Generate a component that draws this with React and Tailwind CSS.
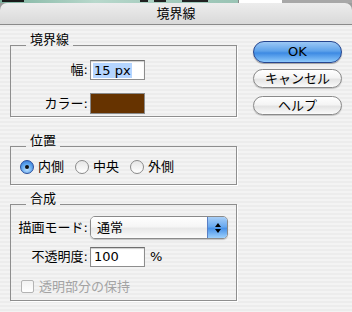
const font = { fontFamily: '"Lucida Grande","DejaVu Sans","Noto Sans CJK JP",sans-serif' }

function Group({ title, children, className = '' }) {
  return (
    <fieldset className={`border border-[#8e8e8e] shadow-[1px_1px_0_#ffffff] p-0 m-0 min-w-0 ${className}`}>
      <legend className="ml-[15px] px-[4px] text-[13px] leading-[14px] pb-[10px] text-black">{title}</legend>
      {children}
    </fieldset>
  )
}

function Radio({ checked, label }) {
  return (
    <div className="flex items-center">
      {checked ? (
        <span className="w-[14px] h-[14px] rounded-full border border-[#2a4f9c] bg-[radial-gradient(circle_at_50%_70%,#bfe1ff_0%,#5aa2ec_55%,#2c6bd1_100%)] flex items-center justify-center">
          <span className="w-[4px] h-[4px] rounded-full bg-[#111]" />
        </span>
      ) : (
        <span className="w-[14px] h-[14px] rounded-full border border-[#8a8a8a] bg-[linear-gradient(to_bottom,#e6e6e6,#ffffff)]" />
      )}
      <span className="ml-[4px] text-[13px] leading-[16px]">{label}</span>
    </div>
  )
}

function AquaButton({ children, primary, className = '' }) {
  return primary ? (
    <div className={`h-[22px] rounded-full border border-[#25458f] bg-[linear-gradient(to_bottom,#9cc8f5_0%,#5ea2ea_45%,#3d8ae3_55%,#8cc8fb_100%)] shadow-[0_1px_1px_rgba(0,0,0,0.35)] flex items-center justify-center text-[13px] ${className}`}>
      {children}
    </div>
  ) : (
    <div className={`h-[19px] rounded-full border border-[#8a8a8a] bg-[linear-gradient(to_bottom,#ffffff_0%,#f4f4f4_45%,#e4e4e4_55%,#fafafa_100%)] shadow-[0_1px_1px_rgba(0,0,0,0.2)] flex items-center justify-center text-[13px] ${className}`}>
      {children}
    </div>
  )
}

export default function App() {
  return (
    <div className="w-[352px] h-[312px] overflow-hidden bg-[#9c9c9c] flex flex-col text-black" style={font}>
      {/* background window strip */}
      <div className="h-[3px] flex shrink-0">
        <div className="w-[238px] bg-[linear-gradient(to_right,#7fb3a0,#b8d8cc_40%,#a4cbbd_70%,#9ac4b5)] flex items-start gap-[6px] pl-[2px]">
          <span className="w-[22px] h-[2px] bg-[#1a1a1a]" />
          <span className="ml-[110px] w-[8px] h-[2px] bg-[#222]" />
          <span className="w-[12px] h-[2px] bg-[#222]" />
          <span className="ml-[10px] w-[26px] h-[2px] bg-[#222]" />
        </div>
        <div className="w-[44px] bg-white border-l border-[#888]" />
        <div className="flex-1 bg-[#a8a8a8]" />
      </div>

      <div className="flex-1 flex flex-col rounded-t-[7px] overflow-hidden">
        {/* title bar */}
        <div className="h-[22px] shrink-0 border-b border-[#8a8a8a] bg-[linear-gradient(to_bottom,#ededed,#d9d9d9)] flex items-center justify-center text-[13px] leading-[14px]">
          境界線
        </div>

        {/* body */}
        <div className="flex-1 flex bg-[repeating-linear-gradient(to_bottom,#ececec_0px,#ececec_2px,#f3f3f3_2px,#f3f3f3_4px)]">
          <div className="ml-[10px] w-[227px] flex flex-col">
            <Group title="境界線" className="mt-[8px]">
              <div className="pt-[3px] pb-[2px] flex flex-col">
                <div className="flex items-center h-[20px]">
                  <span className="w-[79px] text-right pr-[2px] text-[13px]">幅:</span>
                  <div className="w-[55px] h-[20px] bg-white border border-[#8d8d8d] border-t-[#6e6e6e] shadow-[inset_0_1px_1px_rgba(0,0,0,0.2)] flex items-center pl-[2px]">
                    <span className="bg-[#b5d5ff] text-[13px] leading-[15px] px-[1px]">15 px</span>
                  </div>
                </div>
                <div className="flex items-center h-[21px] mt-[13px]">
                  <span className="w-[79px] text-right pr-[2px] text-[13px]">カラー:</span>
                  <div className="w-[55px] h-[21px] bg-[#663300] border border-[#8a8a8a]" />
                </div>
              </div>
            </Group>

            <Group title="位置" className="mt-[17px]">
              <div className="pt-[1px] pb-[9px] pl-[9px] flex items-center gap-[11px]">
                <Radio checked label="内側" />
                <Radio label="中央" />
                <Radio label="外側" />
              </div>
            </Group>

            <Group title="合成" className="mt-[7px]">
              <div className="pb-[7px] flex flex-col">
                <div className="flex items-center h-[23px]">
                  <span className="w-[79px] text-right pr-[2px] text-[13px]">描画モード:</span>
                  <div className="w-[138px] h-[23px] rounded-[5px] border border-[#8a8a8a] shadow-[0_1px_1px_rgba(0,0,0,0.2)] overflow-hidden flex">
                    <div className="flex-1 bg-[linear-gradient(to_bottom,#ffffff_0%,#f6f6f6_45%,#e8e8e8_55%,#fbfbfb_100%)] flex items-center pl-[6px] text-[13px]">
                      通常
                    </div>
                    <div className="w-[20px] border-l border-[#5a7fc4] bg-[linear-gradient(to_bottom,#a9cff7_0%,#6aaaf0_45%,#4a93e8_55%,#9dd0fc_100%)] flex flex-col items-center justify-center gap-[2px]">
                      <span className="w-0 h-0 border-l-[3px] border-r-[3px] border-b-[4px] border-l-transparent border-r-transparent border-b-black" />
                      <span className="w-0 h-0 border-l-[3px] border-r-[3px] border-t-[4px] border-l-transparent border-r-transparent border-t-black" />
                    </div>
                  </div>
                </div>
                <div className="flex items-center h-[20px] mt-[8px]">
                  <span className="w-[79px] text-right pr-[2px] text-[13px]">不透明度:</span>
                  <div className="w-[55px] h-[20px] bg-white border border-[#8d8d8d] border-t-[#6e6e6e] shadow-[inset_0_1px_1px_rgba(0,0,0,0.2)] flex items-center pl-[3px] text-[13px]">
                    100
                  </div>
                  <span className="ml-[5px] text-[13px]">%</span>
                </div>
                <div className="flex items-center h-[13px] mt-[13px] pl-[10px]">
                  <span className="w-[13px] h-[13px] rounded-[2px] border border-[#b4b4b4] bg-[linear-gradient(to_bottom,#f2f2f2,#ffffff)]" />
                  <span className="ml-[5px] text-[13px] leading-[14px] text-[#a3a3a3]">透明部分の保持</span>
                </div>
              </div>
            </Group>
          </div>

          <div className="ml-[16px] w-[89px] flex flex-col">
            <AquaButton primary className="mt-[16px]">OK</AquaButton>
            <AquaButton className="mt-[6px]">キャンセル</AquaButton>
            <AquaButton className="mt-[8px]">ヘルプ</AquaButton>
          </div>
        </div>
      </div>
    </div>
  )
}
